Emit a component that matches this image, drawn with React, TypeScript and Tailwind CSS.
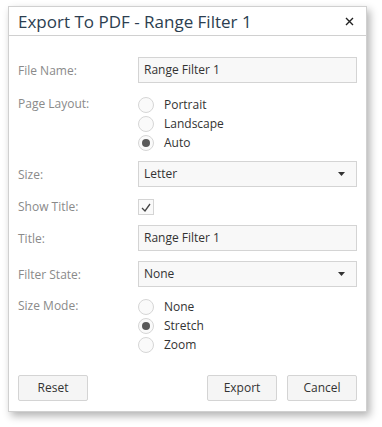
import React from 'react';

const font = { fontFamily: '"Open Sans", "Noto Sans", sans-serif' };

const Radio: React.FC<{ label: string; checked?: boolean }> = ({ label, checked }) => (
  <div className="flex items-center h-[19px]">
    <span className="w-[16px] h-[16px] rounded-full border border-[#d6d6d6] bg-[#fafafa] flex items-center justify-center">
      {checked && <span className="w-[8px] h-[8px] rounded-full bg-[#5a5a5a]"></span>}
    </span>
    <span className="ml-[10px] text-[12px] text-[#333]">{label}</span>
  </div>
);

const TextBox: React.FC<{ value: string; dropdown?: boolean }> = ({ value, dropdown }) => (
  <div className="h-[26px] w-full border border-[#d4d4d4] bg-[#f8f8f8] flex items-center justify-between pl-[5px] pr-[11px]">
    <span className="text-[12px] text-[#333]">{value}</span>
    {dropdown && (
      <svg width="7" height="4" viewBox="0 0 7 4"><path d="M0 0h7L3.5 4z" fill="#333" /></svg>
    )}
  </div>
);

const Label: React.FC<{ text: string }> = ({ text }) => (
  <div className="w-[120px] shrink-0 text-[12px] text-[#8a8a8a]">{text}</div>
);

const Button: React.FC<{ text: string }> = ({ text }) => (
  <button className="w-[70px] h-[26px] border border-[#d4d4d4] rounded-[2px] bg-[#f5f5f5] text-[12px] text-[#333]">
    {text}
  </button>
);

export default function App() {
  return (
    <div className="w-[382px] h-[427px] bg-white pt-[6px] pl-[8px]" style={font}>
      <div className="w-[359px] h-[406px] bg-white border border-[#d0d0d0] shadow-[3px_4px_8px_rgba(0,0,0,0.3)] flex flex-col">
        <div className="h-[29px] border-b border-[#d0d0d0] flex items-center justify-between pl-[9px] pr-[12px]">
          <span className="text-[17px] text-[#2c3e50] leading-none">Export To PDF - Range Filter 1</span>
          <svg width="9" height="9" viewBox="0 0 9 9"><path d="M1 1l7 7M8 1L1 8" stroke="#222" strokeWidth="1.4" /></svg>
        </div>
        <div className="px-[9px] flex flex-col flex-1">
          <div className="flex mt-[21px]">
            <div className="pt-[5px]"><Label text="File Name:" /></div>
            <TextBox value="Range Filter 1" />
          </div>
          <div className="flex mt-[12px]">
            <Label text="Page Layout:" />
            <div className="flex flex-col">
              <Radio label="Portrait" />
              <Radio label="Landscape" />
              <Radio label="Auto" checked />
            </div>
          </div>
          <div className="flex mt-[9px]">
            <div className="pt-[5px]"><Label text="Size:" /></div>
            <TextBox value="Letter" dropdown />
          </div>
          <div className="flex mt-[11px] items-center">
            <Label text="Show Title:" />
            <span className="w-[16px] h-[16px] border border-[#d4d4d4] bg-[#fafafa] flex items-center justify-center">
              <svg width="10" height="9" viewBox="0 0 10 9"><path d="M1 5l3 3 5-7" stroke="#444" strokeWidth="1.3" fill="none" /></svg>
            </span>
          </div>
          <div className="flex mt-[9px]">
            <div className="pt-[5px]"><Label text="Title:" /></div>
            <TextBox value="Range Filter 1" />
          </div>
          <div className="flex mt-[10px]">
            <div className="pt-[5px]"><Label text="Filter State:" /></div>
            <TextBox value="None" dropdown />
          </div>
          <div className="flex mt-[10px]">
            <Label text="Size Mode:" />
            <div className="flex flex-col">
              <Radio label="None" />
              <Radio label="Stretch" checked />
              <Radio label="Zoom" />
            </div>
          </div>
          <div className="flex justify-between mt-auto mb-[10px]">
            <Button text="Reset" />
            <div className="flex gap-[10px]">
              <Button text="Export" />
              <Button text="Cancel" />
            </div>
          </div>
        </div>
      </div>
    </div>
  );
}
